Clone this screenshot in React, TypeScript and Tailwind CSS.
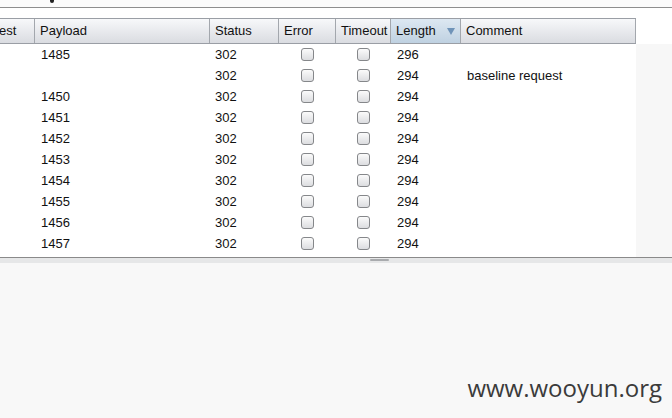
import React from "react";

type Row = {
    payload: string;
    status: string;
    length: string;
    comment?: string;
};

const rows: Row[] = [
    { payload: "1485", status: "302", length: "296" },
    { payload: "", status: "302", length: "294", comment: "baseline request" },
    { payload: "1450", status: "302", length: "294" },
    { payload: "1451", status: "302", length: "294" },
    { payload: "1452", status: "302", length: "294" },
    { payload: "1453", status: "302", length: "294" },
    { payload: "1454", status: "302", length: "294" },
    { payload: "1455", status: "302", length: "294" },
    { payload: "1456", status: "302", length: "294" },
    { payload: "1457", status: "302", length: "294" },
];

function Check() {
    return (
        <div className="w-[13px] h-[13px] rounded-[3px] border border-[#85878a] bg-gradient-to-b from-[#fbfbfb] to-[#dcdde0]"></div>
    );
}

function Head({ label, w, active }: { label: string; w: string; active?: boolean }) {
    return (
        <div
            className={
                "relative flex items-center h-full pl-[5px] border-r border-[#a3a7ad] " +
                w +
                (active ? " bg-gradient-to-b from-[#dde8f2] to-[#bfd1e1]" : "")
            }
        >
            {label}
            {active && (
                <span className="absolute right-[5px] top-[9px] w-0 h-0 border-l-[4px] border-r-[4px] border-t-[7px] border-l-transparent border-r-transparent border-t-[#6f93b8]"></span>
            )}
        </div>
    );
}

export default function App() {
    return (
        <div
            className="w-[672px] h-[418px] overflow-hidden bg-[#f8f8f8] flex flex-col text-[13px] text-[#111]"
            style={{ fontFamily: '"Liberation Sans", Arial, sans-serif' }}
        >
            <div className="relative h-[8px] bg-[#fbfbfb] border-b border-[#8e8e8e] shrink-0">
                <span className="absolute left-[50px] top-0 w-[4px] h-[3px] bg-[#222] rounded-b-[2px]"></span>
            </div>
            <div className="h-[10px] bg-white shrink-0"></div>

            <div className="flex bg-white shrink-0">
                <div className="w-[636px] flex flex-col">
                    <div className="flex h-[26px] border-t border-b border-[#9a9ea5] bg-gradient-to-b from-[#f7f8fa] to-[#dadce1]">
                        <div className="flex items-center h-full w-[35px] border-r border-[#a3a7ad] -ml-[10px] pl-[9px] box-content">
                            est
                        </div>
                        <Head label="Payload" w="w-[175px]" />
                        <Head label="Status" w="w-[69px]" />
                        <Head label="Error" w="w-[57px]" />
                        <Head label="Timeout" w="w-[55px]" />
                        <Head label="Length" w="w-[70px]" active />
                        <Head label="Comment" w="w-[175px]" />
                    </div>
                    {rows.map((r, i) => (
                        <div key={i} className="flex h-[21px] items-center bg-white">
                            <div className="w-[35px]"></div>
                            <div className="w-[175px] pl-[6px]">{r.payload}</div>
                            <div className="w-[69px] pl-[5px]">{r.status}</div>
                            <div className="w-[57px] flex justify-center">
                                <Check />
                            </div>
                            <div className="w-[55px] flex justify-center">
                                <Check />
                            </div>
                            <div className="w-[70px] pl-[6px]">{r.length}</div>
                            <div className="w-[175px] pl-[6px]">{r.comment}</div>
                        </div>
                    ))}
                    <div className="h-[3px] bg-white"></div>
                </div>
                <div className="flex-1 flex flex-col">
                    <div className="h-[26px] bg-white"></div>
                    <div className="flex-1 bg-[#f7f7f7]"></div>
                </div>
            </div>

            <div className="relative h-[6px] border-t border-[#8a8a8a] bg-[#e6e7e8] shrink-0">
                <span className="absolute left-[370px] top-[1px] w-[19px] h-[2px] bg-[#a9abae] rounded-sm"></span>
            </div>

            <div className="flex-1 flex items-end justify-end pr-[10px] pb-[18px]">
                <span
                    className="text-[24px] text-[#3b3b3b] leading-none"
                    style={{ fontFamily: '"Open Sans", "DejaVu Sans", sans-serif' }}
                >
                    www.wooyun.org
                </span>
            </div>
        </div>
    );
}
